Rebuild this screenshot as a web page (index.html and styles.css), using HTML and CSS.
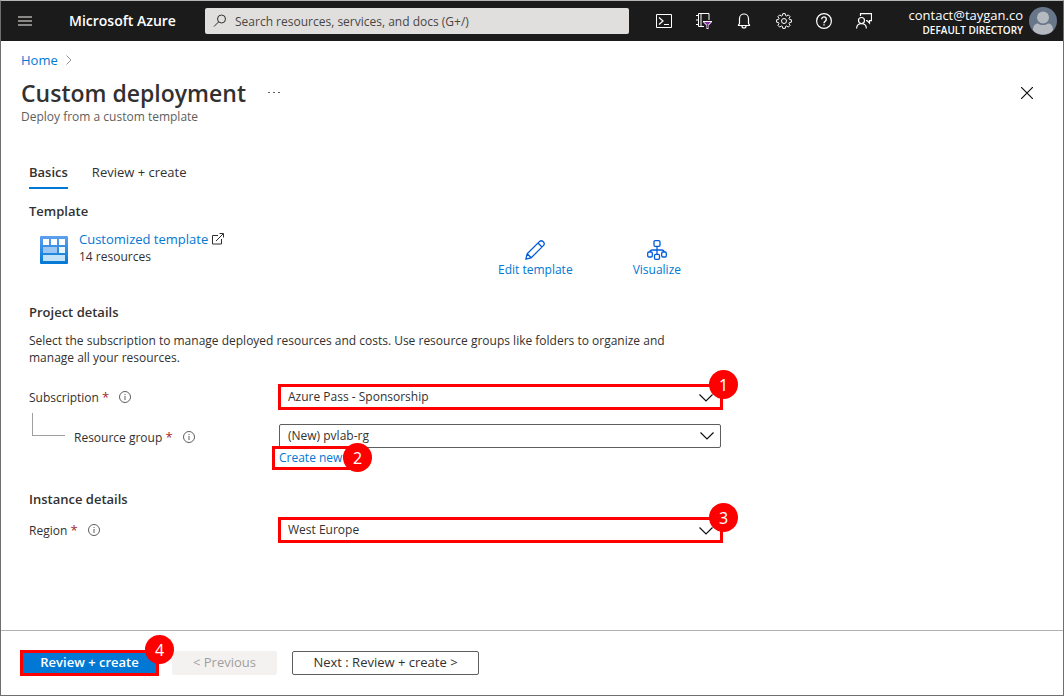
FILE: index.html
```html
<!DOCTYPE html>
<html lang="en">
<head>
<meta charset="utf-8">
<meta name="viewport" content="width=device-width, initial-scale=1">
<title>Custom deployment - Microsoft Azure</title>
<link rel="stylesheet" href="styles.css">
</head>
<body>
<div class="portal">
  <header class="topbar">
    <button class="icon-button menu-button" type="button" aria-label="Show portal menu">
      <svg width="14" height="10" viewBox="0 0 14 10" fill="#8a8886"><path d="M0 0h14v2H0zM0 4h14v2H0zM0 8h14v2H0z"/></svg>
    </button>
    <a class="brand" href="#">Microsoft Azure</a>
    <label class="search">
      <svg width="14" height="14" viewBox="0 0 14 14" fill="none" stroke="#323130"><circle cx="8.500" cy="5" r="4"/><path d="M5.600 7.900L1 12.500"/></svg>
      <input class="search-input" type="text" placeholder="Search resources, services, and docs (G+/)" aria-label="Search resources, services, and docs">
    </label>
    <nav class="tools" aria-label="Portal tools">
      <button class="icon-button tool" type="button" aria-label="Cloud Shell">
        <svg width="16" height="16" viewBox="0 0 16 16" fill="none" stroke="#fff"><path d="M.5 1.500h15v13H.5z"/><path d="M3 4.500l4 3.500-4 3.500" stroke-width="1.200"/><path d="M8 11.500h5"/></svg>
      </button>
      <button class="icon-button tool" type="button" aria-label="Directories and subscriptions">
        <svg width="16" height="16" viewBox="0 0 16 16" fill="none" stroke="#fff"><path d="M8 13.500H2.500v-13h10.500V7M5 .5v13M0 2.500h3M0 7h3M0 11.500h3"/><path d="M7 8h9v1l-3.500 3.500V16h-2v-3.500L7 9z" fill="#fff" stroke="none"/><path d="M8 9h7l-2.800 2.800V15h-1.400v-3.200z" fill="#8a2da5" stroke="none"/></svg>
      </button>
      <button class="icon-button tool" type="button" aria-label="Notifications">
        <svg width="16" height="16" viewBox="0 0 16 16" fill="none" stroke="#fff" stroke-width="1.200"><path d="M2.500 12.500V12l1-1.500V5.500a4.500 4.500 0 0 1 9 0v5l1 1.500v.5z"/><path d="M6 13a2 2 0 0 0 4 0"/></svg>
      </button>
      <button class="icon-button tool" type="button" aria-label="Settings">
        <svg width="16" height="16" viewBox="0 0 16 16" fill="none" stroke="#fff" stroke-linejoin="round"><path d="M6.800.6h2.400l.4 2 1 .4L12.300 1.900l1.800 1.800-1.100 1.700.4 1 2 .4v2.400l-2 .4-.4 1 1.100 1.700-1.800 1.800-1.700-1.100-1 .4-.4 2H6.800l-.4-2-1-.4-1.700 1.100-1.800-1.800L3 10.600l-.4-1-2-.4V6.800l2-.4.400-1L1.900 3.700l1.800-1.800L5.400 3l1-.4z"/><circle cx="8" cy="8" r="2.500"/></svg>
      </button>
      <button class="icon-button tool" type="button" aria-label="Help">
        <svg width="16" height="16" viewBox="0 0 16 16" fill="none" stroke="#fff"><circle cx="8" cy="8" r="7.400" stroke-width="1.200"/><path d="M5.700 6.200a2.300 2.300 0 1 1 3.600 1.900C8.300 8.700 8 9 8 10.200M8 11.200v1.400" stroke-width="1.400"/></svg>
      </button>
      <button class="icon-button tool" type="button" aria-label="Feedback">
        <svg width="16" height="16" viewBox="0 0 16 16" fill="none" stroke="#fff" stroke-width="1.200"><circle cx="5.500" cy="7.500" r="3"/><path d="M.6 15.500c0-6.600 9.800-6.600 9.800 0M4.500 3V.6h11v7h-2v2.500L11 7.600H10"/></svg>
      </button>
    </nav>
    <button class="account" type="button">
      <span class="account-text">
        <span class="account-mail">contact@taygan.co</span>
        <span class="account-directory">DEFAULT DIRECTORY</span>
      </span>
      <svg width="28" height="28" viewBox="0 0 28 28"><defs><clipPath id="avatar"><circle cx="14" cy="14" r="14"/></clipPath></defs><g clip-path="url(#avatar)"><path fill="#68768a" d="M0 0h28v28H0z"/><circle cx="14" cy="10.500" r="6" fill="#b4babf"/><path fill="#b4babf" d="M4 23c0-4 2-6.500 5-6.500 3 2 7 2 10 0 3 0 5 2.500 5 6.500-3 6-17 6-20 0z"/></g></svg>
    </button>
  </header>

  <div class="blade-head">
    <nav class="breadcrumb" aria-label="Breadcrumb">
      <a href="#">Home</a>
      <svg width="6" height="10" viewBox="0 0 6 10" fill="none" stroke="#979593"><path d="M.5.5L5 5 .5 9.500"/></svg>
    </nav>
    <div class="title-row">
      <h1>Custom deployment</h1>
      <button class="icon-button more" type="button" aria-label="More actions">
        <svg width="12" height="2" viewBox="0 0 12 2" fill="#605e5c"><path d="M0 0h2v1H0zM5 0h2v1H5zM10 0h2v1h-2z"/></svg>
      </button>
      <button class="icon-button close" type="button" aria-label="Close">
        <svg width="12" height="12" viewBox="0 0 12 12" fill="none" stroke="#111" stroke-width="1.200"><path d="M0 0l12 12M12 0L0 12"/></svg>
      </button>
    </div>
    <p class="subtitle">Deploy from a custom template</p>
  </div>

  <main class="content">
    <div class="tabs" role="tablist">
      <button class="tab tab-active" type="button" role="tab" aria-selected="true">Basics</button>
      <button class="tab" type="button" role="tab" aria-selected="false">Review + create</button>
    </div>

    <section class="template">
      <h2>Template</h2>
      <div class="template-row">
        <div class="template-info">
          <svg class="template-icon" width="28" height="28" viewBox="0 0 28 28"><defs><linearGradient id="tile" x2="0" y2="1"><stop stop-color="#5ea0ef"/><stop offset="1" stop-color="#0078d4"/></linearGradient></defs><rect width="28" height="28" rx="1" fill="url(#tile)"/><path fill="#fff" d="M3 3h6v6H3zM11 3h6v6h-6zM19 3h6v6h-6z"/><path fill="#9cc7f3" d="M3 11h14v6H3z"/><path fill="#e9f4fd" d="M19 11h6v6h-6z"/><path fill="#c3e1f7" d="M3 19h22v6H3z"/></svg>
          <div>
            <a class="template-link" href="#">Customized template
              <svg width="12" height="12" viewBox="0 0 12 12" fill="none" stroke="#323130"><path d="M6 2.500H.5v8.500h9V6M4 8l7-7M7.500.5h4v4"/></svg></a>
            <p class="template-count">14 resources</p>
          </div>
        </div>
        <a class="action" href="#">
          <svg width="20" height="20" viewBox="0 0 20 20" fill="none" stroke="#015cda" stroke-width="1.300" stroke-linejoin="round"><path d="M.8 19.200l1.400-5.400L14.600 1.400c2.400-2 6 1.500 4 4L6.200 17.800zM2.200 13.800l4 4M13 3l4 4"/></svg>
          Edit template
        </a>
        <a class="action action-visualize" href="#">
          <svg width="20" height="20" viewBox="0 0 20 20" fill="none" stroke="#015cda" stroke-width="1.300"><rect x="7" y=".7" width="6" height="5.600" rx="1.200"/><rect x=".7" y="12" width="4.600" height="5" rx="1.200"/><rect x="14.700" y="12" width="4.600" height="5" rx="1.200"/><rect x="7.500" y="14.300" width="5" height="5" rx="1.200"/><path d="M10 6.300v8M3 12c0-1.500 1-2 2.500-2h9c1.500 0 2.500.5 2.500 2"/></svg>
          Visualize
        </a>
      </div>
    </section>

    <section class="project">
      <h2>Project details</h2>
      <p class="description">Select the subscription to manage deployed resources and costs. Use resource groups like folders to organize and manage all your resources.</p>
      <div class="field">
        <div class="field-label"><label for="subscription">Subscription <span class="required">*</span></label>
          <svg width="12" height="12" viewBox="0 0 12 12" fill="none" stroke="#605e5c"><circle cx="6" cy="6" r="5.500"/><path d="M6 5v4M6 3v1"/></svg></div>
        <div class="control marked">
          <select id="subscription"><option>Azure Pass - Sponsorship</option></select>
          <svg class="chevron" width="14" height="8" viewBox="0 0 14 8" fill="none" stroke="#111" stroke-width="1.200"><path d="M.5.5L7 7 13.500.5"/></svg>
          <span class="step">1</span>
        </div>
      </div>
      <div class="field field-nested">
        <div class="field-label"><span class="branch"></span><label for="group">Resource group <span class="required">*</span></label>
          <svg width="12" height="12" viewBox="0 0 12 12" fill="none" stroke="#605e5c"><circle cx="6" cy="6" r="5.500"/><path d="M6 5v4M6 3v1"/></svg></div>
        <div class="control plain">
          <select id="group"><option>(New) pvlab-rg</option></select>
          <svg class="chevron" width="14" height="8" viewBox="0 0 14 8" fill="none" stroke="#111" stroke-width="1.200"><path d="M.5.5L7 7 13.500.5"/></svg>
          <div class="create marked"><a href="#">Create new</a><span class="step">2</span></div>
        </div>
      </div>
    </section>

    <section class="instance">
      <h2>Instance details</h2>
      <div class="field">
        <div class="field-label"><label for="region">Region <span class="required">*</span></label>
          <svg width="12" height="12" viewBox="0 0 12 12" fill="none" stroke="#605e5c"><circle cx="6" cy="6" r="5.500"/><path d="M6 5v4M6 3v1"/></svg></div>
        <div class="control marked">
          <select id="region"><option>West Europe</option></select>
          <svg class="chevron" width="14" height="8" viewBox="0 0 14 8" fill="none" stroke="#111" stroke-width="1.200"><path d="M.5.5L7 7 13.500.5"/></svg>
          <span class="step">3</span>
        </div>
      </div>
    </section>
  </main>

  <footer class="actions">
    <div class="marked primary-wrap"><button class="button primary" type="button">Review + create</button><span class="step">4</span></div>
    <button class="button previous" type="button" disabled>&lt; Previous</button>
    <button class="button next" type="button">Next : Review + create &gt;</button>
  </footer>
</div>
</body>
</html>
```
FILE: styles.css
```css
* { box-sizing: border-box; }

body {
  margin: 0;
  font: 12px/18px "Open Sans", "Noto Sans", sans-serif;
  color: #323130;
  background: #fff;
}

h1, h2, p { margin: 0; }
h2 { font-size: 13px; line-height: 18px; font-weight: 600; }
a { color: #0078d4; text-decoration: none; }
svg { flex: none; display: block; }
button, input, select { font: inherit; color: inherit; }

.portal {
  display: flex;
  flex-direction: column;
  min-height: 100vh;
  border: 1px solid #6e6e6e;
  border-top-color: #b4b8b4;
}

.icon-button {
  display: grid;
  place-items: center;
  padding: 0;
  border: 0;
  background: none;
}

/* Top bar */
.topbar {
  display: flex;
  align-items: center;
  height: 40px;
  background: #1b1b1b;
  color: #fff;
}
.menu-button { width: 48px; height: 40px; }
.brand {
  flex: none;
  width: 136px;
  margin-left: 20px;
  color: #fff;
  font-size: 14px;
  line-height: 20px;
  font-weight: 600;
}
.search {
  display: flex;
  flex: 0 1 424px;
  align-items: center;
  gap: 8px;
  height: 26px;
  padding: 0 8px;
  border-radius: 2px;
  background: #e1dfdd;
}
.search-input {
  flex: 1;
  min-width: 0;
  padding: 1px 0 0;
  border: 0;
  outline: 0;
  background: none;
}
.search-input::placeholder { color: #484644; opacity: 1; }
.tools { display: flex; margin-left: 15px; }
.tool { width: 40px; height: 40px; }
.account {
  display: flex;
  align-items: center;
  gap: 6px;
  margin-left: auto;
  padding: 0 6px 0 0;
  border: 0;
  background: none;
  color: #fff;
  text-align: right;
}
.account-text { display: grid; padding-top: 2px; }
.account-mail { font-size: 13px; line-height: 16px; }
.account-directory { font-size: 10px; line-height: 14px; font-weight: 600; }

/* Blade heading */
.blade-head { padding: 10px 30px 0 20px; }
.breadcrumb { display: flex; align-items: center; gap: 8px; font-size: 13px; }
.title-row { display: flex; align-items: center; height: 32px; margin-top: 8px; }
h1 { font-size: 23px; line-height: 32px; font-weight: 600; }
.more { width: 24px; height: 24px; margin-left: 16px; }
.close { width: 12px; height: 24px; margin-left: auto; }
.subtitle { line-height: 16px; color: #605e5c; }

/* Form */
.content { flex: 1; padding: 38px 28px 24px; }
.tabs { display: flex; gap: 24px; }
.tab {
  height: 26px;
  padding: 0 0 6px;
  border: 0;
  border-bottom: 2px solid transparent;
  background: none;
  font-size: 13px;
  line-height: 16px;
}
.tab-active { border-color: #0078d4; font-weight: 600; }
.template { margin-top: 13px; }
.template-row { display: flex; align-items: flex-start; max-width: 652px; margin-top: 10px; }
.template-info { display: flex; flex: 1; align-items: center; gap: 11px; padding-left: 11px; }
.template-icon { margin-top: 4px; }
.template-link { display: flex; align-items: center; gap: 4px; font-size: 13px; }
.action {
  display: grid;
  justify-items: center;
  gap: 1px;
  padding-top: 10px;
}
.action-visualize { margin-left: 60px; }

.project { margin-top: 24px; }
.description { max-width: 672px; margin-top: 11px; line-height: 17px; }
.field { display: flex; align-items: flex-start; max-width: 694px; margin-top: 18px; }
.field-label {
  display: flex;
  flex: 0 0 249px;
  align-items: center;
  gap: 10px;
  height: 26px;
}
.required { color: #a4262c; font-size: 13px; }
.field-nested { margin-top: 14px; }
.branch {
  width: 33px;
  height: 23px;
  margin: -26px -1px 0 3px;
  border: solid #a19f9d;
  border-width: 0 0 1px 1px;
}
.control { position: relative; flex: 1; }
.plain { margin-left: 1px; }
.control select {
  display: block;
  width: 442px;
  max-width: 100%;
  height: 24px;
  padding: 0 8px;
  border: 1px solid #605e5c;
  border-radius: 2px;
  appearance: none;
  background: #fff;
}
.chevron { position: absolute; top: 8px; right: 9px; pointer-events: none; }

/* Numbered step callouts */
.marked { position: relative; border: 3px solid #f00; }
.control.marked select { width: 100%; height: 20px; padding: 0 7px; border: 0; }
.marked > .chevron { top: 7px; right: 7px; }
.step {
  position: absolute;
  display: grid;
  place-items: center;
  width: 29px;
  height: 29px;
  border-radius: 50%;
  background: #f00;
  color: #fff;
  font-family: "Noto Sans", sans-serif;
  font-size: 16px;
  line-height: 20px;
}
.control.marked > .step { top: -17px; right: -18px; }
.create {
  width: 88px;
  height: 24px;
  margin: -2px 0 0 -7px;
  padding-left: 4px;
  background: #fff;
}
.create .step { top: -6px; right: -15px; }

.instance { margin-top: 20px; }
.instance .field { margin-top: 9px; }

/* Footer */
.actions {
  display: flex;
  align-items: center;
  height: 65px;
  padding-left: 19px;
  border-top: 1px solid #b3b0ad;
}
.button {
  height: 24px;
  padding: 0 0 2px;
  border: 1px solid #605e5c;
  border-radius: 2px;
  background: #fff;
  font-size: 13px;
  line-height: 18px;
  font-weight: 500;
}
.primary-wrap { width: 139px; }
.primary { display: block; width: 100%; height: 20px; border: 0; border-radius: 0; background: #0078d4; color: #fff; font-weight: 600; }
.primary-wrap .step { top: -18px; right: -18px; }
.previous { width: 105px; margin-left: 13px; border-color: #f3f2f1; background: #f3f2f1; color: #a19f9d; }
.next { width: 187px; margin-left: 15px; }
```
